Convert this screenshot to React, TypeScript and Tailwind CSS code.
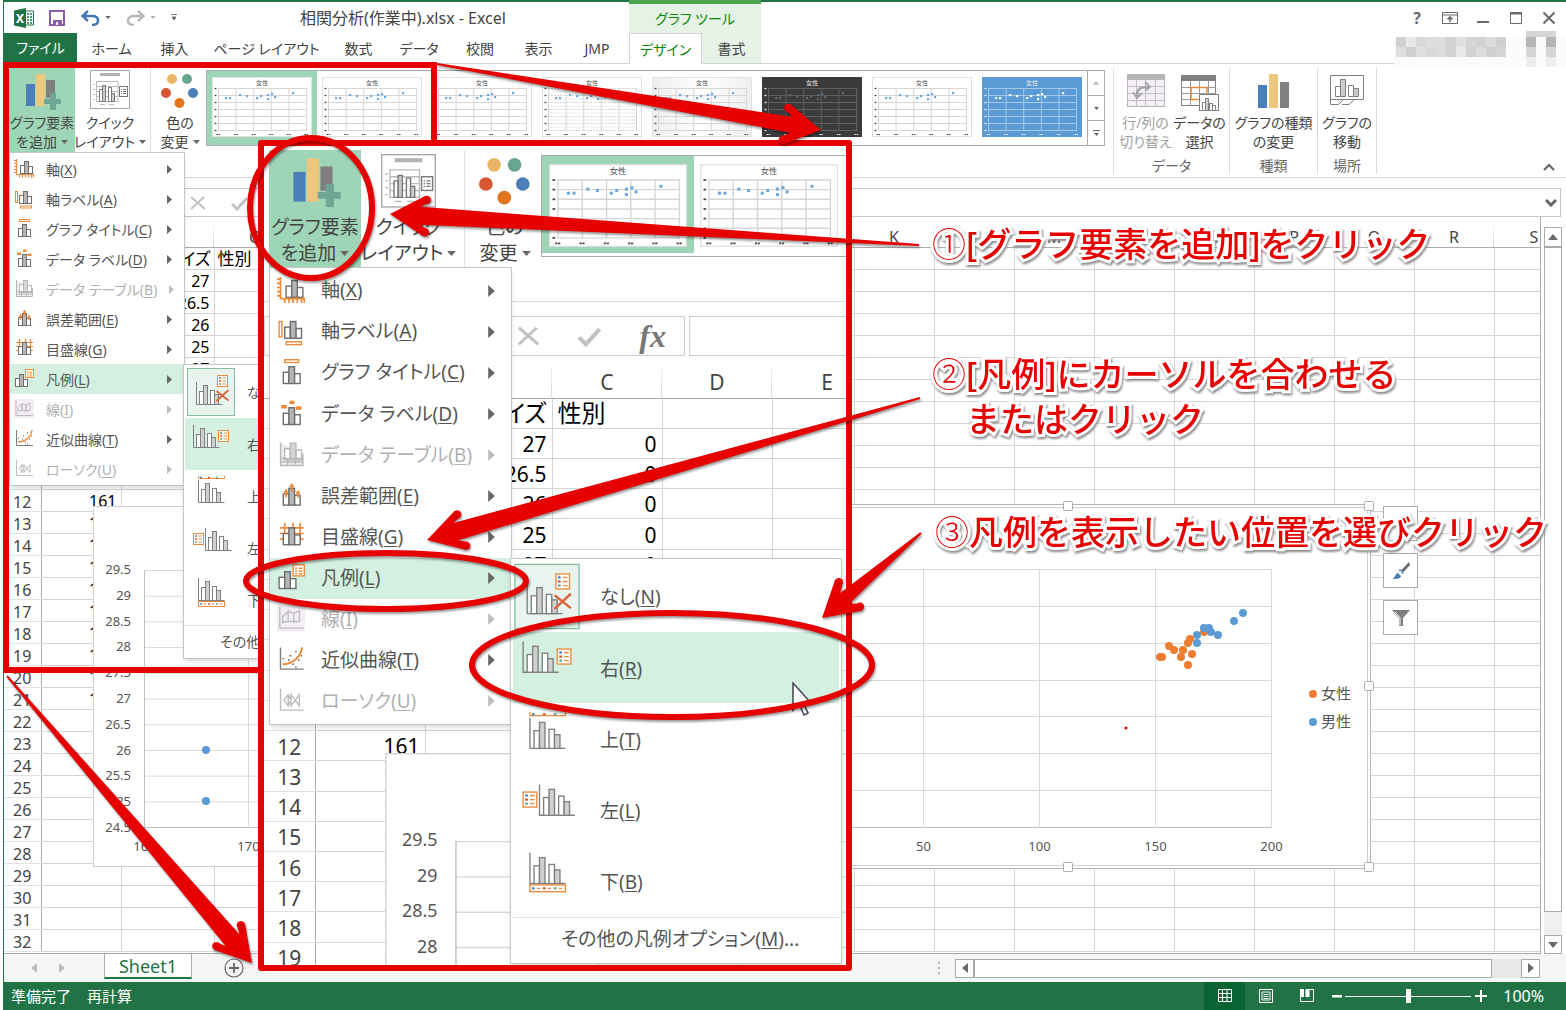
import React from "react";

const GRAY = "#7f7f7f";
const ORANGE = "#ed8b3b";
const RED = "#e60000";

/* ---------- menu icons ---------- */

function Bars({ dx = 0, dy = 0, color = "#6e6e6e", fill = "#b5b5b5" }: { dx?: number; dy?: number; color?: string; fill?: string }) {
  return (
    <g transform={`translate(${dx} ${dy})`} stroke={color} strokeWidth="1">
      <rect x="5.5" y="6.5" width="4" height="8" fill="#fff" />
      <rect x="13.5" y="7.5" width="4" height="7" fill="#fff" />
      <rect x="9.5" y="2.5" width="4" height="12" fill={fill} />
    </g>
  );
}

const menuIcons: Record<string, React.ReactNode> = {
  axis: (
    <>
      <Bars dx={1} />
      <path d="M2.5 0v15.5H20M0 1.5h2M0 4.5h2M0 7.5h2M0 10.5h2M0 13.5h2M5.5 16v2.5M8.5 16v2.5M11.5 16v2.5M14.5 16v2.5M17.5 16v2.5M19.5 16v2.5" stroke={ORANGE} strokeWidth="1.2" fill="none" />
    </>
  ),
  axisLabel: (
    <>
      <Bars />
      <rect x="1.5" y="2.5" width="2" height="11" fill="#fff" stroke={ORANGE} />
      <rect x="6.5" y="17" width="11" height="2" fill="#fff" stroke={ORANGE} />
    </>
  ),
  title: (
    <>
      <Bars dy={3} dx={-1} />
      <rect x="5.5" y="0.5" width="10" height="2" fill="#fff" stroke={ORANGE} />
    </>
  ),
  dataLabel: (
    <>
      <Bars dy={3} dx={-1} />
      <path d="M3 3.500h4V6H3zM9 .5h3.500V3H9zM13.500 4.500h4V7h-4z" fill={ORANGE} />
    </>
  ),
  dataTable: (
    <>
      <path d="M2.500 1v16.500H18.500V9" fill="#efeaf2" stroke="#b8b8b8" />
      <Bars color="#b8b8b8" fill="#d5d5d5" dy={-1} />
      <path d="M2.500 12.500h16M2.500 15h16M7.500 12v5M13 12v5" stroke="#b8b8b8" fill="none" />
    </>
  ),
  error: (
    <>
      <Bars dy={2} dx={-1} />
      <path d="M6.500 5v6M10.500 1v6M15 6v5M5 7h3M9 3h3M13.500 8h3" stroke={ORANGE} strokeWidth="1.300" />
    </>
  ),
  grid: (
    <>
      <path d="M2 3.500h17M2 7.500h17M2 11.500h17M5.500 0v15M11.500 0v4M16.500 0v15" stroke={ORANGE} strokeWidth="1.200" fill="none" />
      <Bars dy={1} dx={-1} />
    </>
  ),
  legend: (
    <>
      <Bars dx={-4} dy={3} />
      <rect x="11.500" y="0.500" width="8" height="8" fill="#fff" stroke={ORANGE} />
      <path d="M13 3h1.500M15.500 3H18M13 5h1.500M15.500 5H18M13 7h1.500M15.500 7H18" stroke={ORANGE} strokeWidth="1" />
    </>
  ),
  line: (
    <>
      <rect width="20" height="19" fill="#f3eef6" />
      <path d="M2 1v15.500h17M4 12.500V8.500l4-4v7zM8 11.500V4.500l4 1.500v6zM12 12V6l4-2v7.500z" stroke="#bdbdbd" fill="none" />
    </>
  ),
  trend: (
    <>
      <path d="M2.500 1v15.500H19" stroke={GRAY} fill="none" />
      <path d="M4 13c7 0 13-5 14-12" stroke={ORANGE} strokeWidth="1.400" fill="none" />
      <path d="M4 9h1M8 10h1M9 7h1M13 4h1M11 13h1M15 10h1M17 7h1M13 15h1" stroke="#555" />
    </>
  ),
  candle: (
    <path d="M2.500 1v15.500H19M8 5.500L5 9.500l3 4 2-4zM8 5.500v8M10 5.500l6 8v-8l-6 8z" stroke="#bdbdbd" fill="none" />
  ),
};

type Item = { icon: string; label: string; key: string; off?: boolean; hot?: boolean };
const items: Item[] = [
  { icon: "axis", label: "軸", key: "X" },
  { icon: "axisLabel", label: "軸ラベル", key: "A" },
  { icon: "title", label: "グラフ タイトル", key: "C" },
  { icon: "dataLabel", label: "データ ラベル", key: "D" },
  { icon: "dataTable", label: "データ テーブル", key: "B", off: true },
  { icon: "error", label: "誤差範囲", key: "E" },
  { icon: "grid", label: "目盛線", key: "G" },
  { icon: "legend", label: "凡例", key: "L", hot: true },
  { icon: "line", label: "線", key: "I", off: true },
  { icon: "trend", label: "近似曲線", key: "T" },
  { icon: "candle", label: "ローソク", key: "U", off: true },
];

function ElementMenu({ big }: { big?: boolean }) {
  return (
    <div
      role="menu"
      className={
        "flex flex-col border border-[#c6c6c6] bg-white shadow-md " +
        (big ? "h-[458px] w-[243px] py-[2px] text-[19px]" : "h-[334px] w-[176px] py-px text-[14px]")
      }
    >
      {items.map((it) => (
        <button
          key={it.key}
          role="menuitem"
          disabled={it.off}
          className={
            "flex min-h-0 flex-1 items-center whitespace-nowrap text-left " +
            (it.hot ? "bg-[#d3f0e0] " : "") +
            (it.off ? "text-[#b1b1b1] " : "text-[#555] ") +
            (big ? "gap-4 pr-4 pl-[7px]" : "gap-3 pr-3 pl-1")
          }
        >
          <svg viewBox="0 0 20 20" className={big ? "h-7 w-7 shrink-0" : "h-5 w-5 shrink-0"}>{menuIcons[it.icon]}</svg>
          <span className="flex-1">
            {it.label}(<u className="underline-offset-2">{it.key}</u>)
          </span>
          <svg viewBox="0 0 5 9" className={big ? "h-3 w-[7px] shrink-0" : "h-[9px] w-[5px] shrink-0"}>
            <path d="M0 0l5 4.500L0 9z" fill={it.off ? "#bdbdbd" : "#666"} />
          </svg>
        </button>
      ))}
    </div>
  );
}

function Glyph({ x, y }: { x: number; y: number }) {
  return (
    <g transform={`translate(${x} ${y})`} stroke="#808080">
      <path d="M.5 0v22.500H26.500" fill="none" />
      <rect x="3.500" y="9.500" width="4" height="13" fill="#fff" />
      <rect x="7.500" y="3.500" width="4" height="19" fill="#d0d0d0" />
      <rect x="14.500" y="8.500" width="4" height="14" fill="#fff" />
      <rect x="18.500" y="12.500" width="4" height="10" fill="#d0d0d0" />
    </g>
  );
}

function LegendBox({ x, y }: { x: number; y: number }) {
  return (
    <g transform={`translate(${x} ${y})`}>
      <rect x=".5" y=".5" width="10" height="11" fill="#fff" stroke={ORANGE} />
      <path d="M2 3h2" stroke="#4a7fb8" strokeWidth="1.600" />
      <path d="M2 6h2" stroke="#d65532" strokeWidth="1.600" />
      <path d="M2 9h2" stroke="#68a490" strokeWidth="1.600" />
      <path d="M5.500 3H9M5.500 6H9M5.500 9H9" stroke={ORANGE} />
    </g>
  );
}

function LegendStrip({ x, y, h }: { x: number; y: number; h: number }) {
  return (
    <g transform={`translate(${x} ${y})`}>
      {h > 4 ? <rect x=".5" y=".5" width="26" height={h - 1} fill="#fff" stroke={ORANGE} /> : <path d="M.5 0v2.500h26V0" fill="none" stroke={ORANGE} />}
      <path d={`M2 ${h / 2}h2`} stroke="#4a7fb8" strokeWidth="1.600" />
      <path d={`M10 ${h / 2}h2`} stroke="#d65532" strokeWidth="1.600" />
      <path d={`M18 ${h / 2}h2`} stroke="#68a490" strokeWidth="1.600" />
      {h > 4 && <path d={`M5.500 ${h / 2}H8M13.500 ${h / 2}H16M21.500 ${h / 2}H24`} stroke={ORANGE} />}
    </g>
  );
}

const legendItems = [
  {
    label: "なし",
    key: "N",
    icon: (
      <>
        <rect x=".5" y="2.500" width="47" height="47" fill="#e9f4ee" stroke="#86bfa0" />
        <Glyph x={9} y={16} />
        <LegendBox x={30} y={9} />
        <path d="M29.500 25l12 9.500M41.500 24l-12 11" stroke="#d9643f" strokeWidth="1.800" />
      </>
    ),
  },
  { label: "右", key: "R", hot: true, icon: (<><Glyph x={6} y={7} /><LegendBox x={31} y={12} /></>) },
  { label: "上", key: "T", icon: (<><LegendStrip x={11} y={6} h={3} /><Glyph x={11} y={10} /></>) },
  { label: "左", key: "L", icon: (<><LegendBox x={6} y={12} /><Glyph x={18} y={7} /></>) },
  { label: "下", key: "B", icon: (<><Glyph x={11} y={5} /><LegendStrip x={11} y={28} h={6} /></>) },
];

function LegendMenu({ big }: { big?: boolean }) {
  return (
    <div
      role="menu"
      className={
        "flex flex-col border border-[#c6c6c6] bg-white text-[#555] shadow-md " +
        (big ? "h-[406px] w-[332px] p-[2px] text-[19px]" : "h-[295px] w-[241px] p-px text-[14px]")
      }
    >
      {legendItems.map((it) => (
        <button
          key={it.key}
          role="menuitem"
          className={
            "flex min-h-0 flex-1 items-center whitespace-nowrap text-left " +
            (it.hot ? "bg-[#d3f0e0] " : "") +
            (big ? "gap-5 pl-px" : "gap-3 pl-[2px]")
          }
        >
          <svg viewBox="0 0 48 52" className={big ? "h-[71px] w-[66px] shrink-0" : "h-[52px] w-12 shrink-0"}>{it.icon}</svg>
          <span className="pt-[2px]">
            {it.label}(<u className="underline-offset-2">{it.key}</u>)
          </span>
        </button>
      ))}
      <button role="menuitem" className={"border-t border-[#e0e0e0] text-left whitespace-nowrap " + (big ? "h-[44px] pl-12" : "h-8 pl-[35px]")}>
        その他の凡例オプション(<u className="underline-offset-2">M</u>)...
      </button>
    </div>
  );
}

/* ---------- ribbon pieces ---------- */

const dots = [[14, 21], [18, 21], [28, 18], [35, 19], [45, 21], [49, 19], [56, 18], [56, 22], [60, 17], [63, 20], [81, 16]];

function Thumb({ look = "plain", className }: { look?: string; className: string }) {
  const bg = look === "dark" ? "#3b3b3b" : look === "blue" ? "#5b9bd5" : "#ffffff";
  const grid = look === "dark" ? "#606060" : look === "blue" ? "#a4c8ea" : "#d6d6d6";
  const dot = look === "dark" ? "#59697a" : look === "blue" ? "#ffffff" : "#6fa9dc";
  const ink = look === "dark" || look === "blue" ? "#eeeeee" : "#4a4a4a";
  return (
    <svg viewBox="0 0 100 60" className={className}>
      <defs>
        <linearGradient id="thumb-fade" x1="0" y1="0" x2="1" y2="0">
          <stop offset="0" stopColor="#eeeeee" />
          <stop offset=".5" stopColor="#ffffff" />
          <stop offset="1" stopColor="#eeeeee" />
        </linearGradient>
      </defs>
      <rect x=".5" y=".5" width="99" height="59" fill={look === "fade" ? "url(#thumb-fade)" : bg} stroke={look === "dark" || look === "blue" ? bg : "#e2e2e2"} />
      {[0, 1, 2, 3, 4, 5, 6].map((i) => (
        <path key={i} d={`M6 ${11.5 + i * 7}H95`} stroke={grid} strokeDasharray={look === "hatch" ? "2 1" : undefined} />
      ))}
      {look === "hatch" && [0, 1, 2, 3, 4, 5].map((i) => <path key={i} d={`M6 ${15 + i * 7}H95`} stroke="#eeeeee" />)}
      {[0, 1, 2, 3, 4, 5].map((i) => (
        <path key={i} d={`M${6.5 + i * 17.6} 11V54`} stroke={grid} />
      ))}
      {[0, 1, 2, 3, 4, 5, 6].map((i) => (
        <path key={i} d={`M2.500 ${11.5 + i * 7}h2`} stroke={ink} strokeWidth="1.300" />
      ))}
      {[0, 1, 2, 3, 4, 5].map((i) => (
        <path key={i} d={`M${4.5 + i * 17.6} 57.500h4`} stroke={ink} strokeWidth="1.200" strokeDasharray="1.600 .5" />
      ))}
      <text x="50" y="7.500" fontSize="6" textAnchor="middle" fill={ink}>女性</text>
      {dots.map(([x, y], i) => (
        <rect key={i} x={x - 1} y={y - 1} width="2.200" height="2.200" fill={dot} />
      ))}
    </svg>
  );
}

function AddIcon({ className }: { className: string }) {
  return (
    <svg viewBox="0 0 40 38" className={className}>
      <path d="M4 10h9v22H4z" fill="#4a7fb8" />
      <path d="M14 0h9v32h-9z" fill="#eec77f" />
      <path d="M24 6h9v18h-9z" fill="#808080" />
      <path d="M28 19h6v6h5v5h-5v6h-6v-6h-6v-5h6z" fill="#6fa594" />
    </svg>
  );
}

function QuickIcon({ className }: { className: string }) {
  return (
    <svg viewBox="0 0 40 40" className={className}>
      <rect x=".5" y=".5" width="39" height="38" fill="#fff" stroke="#a8a8a8" />
      <rect x="10" y="3" width="20" height="3" fill="#b3b3b3" />
      <path d="M6.500 11.500H28v20H6.500zM6.500 16.500H28M6.500 21.500H28M6.500 26.500H28M3 14.500h2M3 19.500h2M3 24.500h2M3 29.500h2M10 34.500h5M19 34.500h5" stroke="#bbb" fill="none" />
      <g stroke="#777" fill="#fff">
        <path d="M9.500 19.500h3v12h-3zM18.500 17.500h3v14h-3z" />
        <path d="M12.500 15.500h3v16h-3zM21.500 23.500h3v8h-3z" fill="#ccc" />
        <rect x="29.500" y="16.500" width="8" height="10" />
        <path d="M31 19.500h1M33 19.500h3M31 21.500h1M33 21.500h3M31 23.500h1M33 23.500h3" />
      </g>
    </svg>
  );
}

function ColorIcon({ className }: { className: string }) {
  return (
    <svg viewBox="0 0 38 38" className={className}>
      <circle cx="11" cy="5" r="5" fill="#eab665" />
      <circle cx="26" cy="5" r="5" fill="#66a690" />
      <circle cx="5" cy="19" r="5" fill="#d65532" />
      <circle cx="32" cy="19" r="5" fill="#4a7fb8" />
      <circle cx="18.500" cy="29" r="5" fill="#e3761c" />
    </svg>
  );
}

function Caret({ className = "inline-block h-[4px] w-[7px]" }: { className?: string }) {
  return (
    <svg viewBox="0 0 7 4" className={className}>
      <path d="M0 0h7L3.500 4z" fill="#666" />
    </svg>
  );
}

function RibbonButton({ icon, lines, caret, big, className, off }: { icon: React.ReactNode; lines: [string, string]; caret?: boolean; big?: boolean; className: string; off?: boolean }) {
  return (
    <button
      disabled={off}
      className={
        "flex shrink-0 flex-col items-center whitespace-nowrap " +
        (off ? "text-[#a0a0a0] " : "text-[#444] ") +
        (big ? "h-[117px] pt-2 text-[19px] leading-[26px] " : "h-[84px] pt-[6px] text-[14px] leading-[19px] ") +
        className
      }
    >
      <span className={"flex items-start justify-center " + (big ? "h-[56px]" : "h-[39px]")}>{icon}</span>
      <span>{lines[0]}</span>
      <span className="flex items-center gap-1">
        {lines[1]}
        {caret && <Caret className={big ? "h-[5px] w-[9px]" : "h-1 w-[7px]"} />}
      </span>
    </button>
  );
}

function ChartTools({ big }: { big?: boolean }) {
  const size = big ? "h-[52px] w-[54px]" : "h-[38px] w-10";
  return (
    <div className={"flex shrink-0 " + (big ? "w-[277px]" : "w-[202px]")}>
      <RibbonButton big={big} caret icon={<AddIcon className={size} />} lines={["グラフ要素", "を追加"]} className={"bg-[#9fd5b7] " + (big ? "w-[92px]" : "w-[66px]")} />
      <RibbonButton big={big} caret icon={<QuickIcon className={"-mt-1 " + (big ? "h-[55px] w-[55px]" : "h-10 w-10")} />} lines={["クイック", "レイアウト"]} className={"border-r border-[#e1e1e1] " + (big ? "w-[104px] pr-2" : "w-[76px] pr-[5px]")} />
      <RibbonButton big={big} caret icon={<ColorIcon className={size} />} lines={["色の", "変更"]} className={big ? "w-[80px]" : "w-[58px]"} />
    </div>
  );
}

/* ---------- worksheet ---------- */

const letters = "ABCDEFGHIJKLMNOPQRSTUVWXYZ".split("");
const cells: Record<string, string> = {
  B1: "サイズ", C1: "性別", B2: "27", C2: "0", B3: "26.5", C3: "0", B4: "26", C4: "0", B5: "25", C5: "0", B6: "27", C6: "0", A12: "161",
  A13: "165", A14: "158", A15: "163", A16: "160", A17: "168", A18: "162", A19: "166", A20: "170", A21: "164",
};

function Sheet({ cols, rows, big }: { cols: number; rows: number; big?: boolean }) {
  return (
    <table className={"table-fixed border-collapse text-black " + (big ? "h-[617px] w-[728px] text-[21px] leading-none" : "w-[1570px] text-base leading-none")}>
      <colgroup>
        <col className={big ? "w-[51px]" : "w-[37px]"} />
        {letters.slice(0, cols).map((l) => (
          <col key={l} className={l === "B" ? (big ? "w-[127px]" : "w-[93px]") : big ? "w-[110px]" : "w-[80px]"} />
        ))}
      </colgroup>
      <thead>
        <tr className={big ? "h-[42px]" : "h-[30px]"}>
          <th className="border-r border-b border-[#ababab]" />
          {letters.slice(0, cols).map((l) => (
            <th key={l} scope="col" className={"border-b border-b-[#ababab] bg-[linear-gradient(to_top,#d4d4d4,#f4f4f4)] bg-[length:1px_70%] bg-[position:right_bottom] bg-no-repeat p-0 font-normal text-[#444] " + (big ? "pt-3" : "pt-[10px]")}>
              {l}
            </th>
          ))}
        </tr>
      </thead>
      <tbody>
        {Array.from({ length: rows }, (_, r) => (
          <tr key={r} className={big ? "" : "h-[22px]"}>
            <th scope="row" className="border-r border-b border-r-[#ababab] border-b-[#e1e1e1] p-0 pt-[3px] font-normal text-[#444]">{r + 1}</th>
            {letters.slice(0, cols).map((l) => {
              const v = cells[l + (r + 1)] ?? "";
              const head = (big ? "text-[24px] px-[5px] " : "text-[17px] px-[3px] ") + (l === "B" ? "text-right" : "text-left");
              return (
                <td key={l} className={"overflow-hidden border-r border-b border-[#d4d4d4] py-0 whitespace-nowrap " + (r === 0 ? head : "pt-[2px] text-right " + (big ? "px-[5px]" : "px-1"))}>
                  {v}
                </td>
              );
            })}
          </tr>
        ))}
      </tbody>
    </table>
  );
}

function SizeChart({ className }: { className: string }) {
  const labels = ["29.5", "29", "28.5", "28", "27.5", "27", "26.5", "26", "25.5", "25", "24.5"];
  return (
    <svg viewBox="0 0 400 361" className={className}>
      <rect x=".5" y=".5" width="399" height="360" fill="#fff" stroke="#d0d0d0" />
      {labels.map((l, i) => (
        <g key={l}>
          <path d={`M51 ${64.5 + i * 25.7}H380`} stroke={i === 10 ? "#bfbfbf" : "#d9d9d9"} />
          <text x="38" y={68 + i * 25.8} textAnchor="end" fontSize="13" fill="#555">{l}</text>
        </g>
      ))}
      {[51.5, 155.5, 259.5, 363.5].map((x, i) => (
        <g key={x}>
          <path d={`M${x} 64V321`} stroke={i === 0 ? "#bfbfbf" : "#d9d9d9"} />
          <text x={x} y="345" textAnchor="middle" fontSize="13" fill="#555">{160 + i * 10}</text>
        </g>
      ))}
      <circle cx="113" cy="244" r="4" fill="#5b9bd5" />
      <circle cx="113" cy="295" r="4" fill="#5b9bd5" />
    </svg>
  );
}

const women = [[1160, 657], [1162, 657], [1169, 646], [1174, 650], [1183, 650], [1190, 639], [1188, 643], [1181, 657], [1192, 654], [1188, 665], [1204, 632]];
const men = [[1243, 613], [1234, 621], [1204, 628], [1209, 628], [1211, 632], [1218, 635], [1197, 635], [1197, 643]];

function GroupChart() {
  return (
    <svg viewBox="760 500 616 374" className="h-[374px] w-[616px]">
      <rect x="766.500" y="504.500" width="604" height="364" fill="#fff" stroke="#b5b5b5" />
      <rect x="769.500" y="507.500" width="598" height="358" fill="#fff" stroke="#d0d0d0" />
      {[569.5, 606.5, 643.5, 680.5, 716.5, 753.5, 790.5, 827.5].map((y, i) => (
        <path key={y} d={`M808 ${y}H1271`} stroke={i === 7 ? "#bfbfbf" : "#d9d9d9"} />
      ))}
      {[50, 100, 150, 200].map((v, i) => (
        <g key={v}>
          <path d={`M${923.5 + i * 116} 569V828`} stroke="#d9d9d9" />
          <text x={923.5 + i * 116} y="851" textAnchor="middle" fontSize="13" fill="#555">{v}</text>
        </g>
      ))}
      {women.map(([x, y], i) => <circle key={i} cx={x} cy={y} r="4" fill="#ed7d31" />)}
      {men.map(([x, y], i) => <circle key={i} cx={x} cy={y} r="4" fill="#5b9bd5" />)}
      <circle cx="1313" cy="694" r="4" fill="#ed7d31" />
      <circle cx="1313" cy="722" r="4" fill="#5b9bd5" />
      <text x="1321" y="699" fontSize="15" fill="#555">女性</text>
      <text x="1321" y="727" fontSize="15" fill="#555">男性</text>
      <circle cx="1126" cy="728" r="1.500" fill={RED} />
      {[[1068, 506], [1369, 506], [1369, 686], [1068, 867], [1369, 867]].map(([x, y]) => (
        <rect key={`${x}-${y}`} x={x - 4.5} y={y - 4.5} width="9" height="9" rx="1" fill="#fff" stroke="#ababab" />
      ))}
    </svg>
  );
}

/* ---------- call-out drawing ---------- */

function Arrow({ from, to, neck = 8 }: { from: [number, number]; to: [number, number]; neck?: number }) {
  const len = Math.hypot(to[0] - from[0], to[1] - from[1]);
  const u = [(to[0] - from[0]) / len, (to[1] - from[1]) / len];
  const p = (back: number, side: number) => {
    const x = to[0] - u[0] * back - u[1] * side;
    const y = to[1] - u[1] * back + u[0] * side;
    return `${x.toFixed(1)} ${y.toFixed(1)}`;
  };
  const c = (back: number, side: number) => {
    const [x, y] = p(back, side).split(" ");
    return <circle cx={x} cy={y} r="4.200" fill="url(#arrow-red)" />;
  };
  return (
    <g>
      <path d={`M${p(len, -1)}L${p(30, -neck)}L${p(37, -12.5)}L${p(34, -20)}L${p(0, 0)}L${p(34, 20)}L${p(37, 12.5)}L${p(30, neck)}L${p(len, 1)}z`} fill={RED} />
      {c(36, -16.2)}
      {c(36, 16.2)}
    </g>
  );
}

function Note({ children, className }: { children: React.ReactNode; className: string }) {
  return (
    <p className={"absolute text-[34px] leading-[45px] font-medium whitespace-nowrap text-[#e60000] [font-feature-settings:normal] [-webkit-text-stroke:6px_white] [paint-order:stroke_fill] drop-shadow-[1px_2px_1px_#888] " + className}>
      {children}
    </p>
  );
}

/* ---------- title bar ---------- */

const tabs: [string, string][] = [
  ["ホーム", "w-[69px]"], ["挿入", "w-[57px]"], ["ページ レイアウト", "w-[127px]"], ["数式", "w-[57px]"],
  ["データ", "w-[64px]"], ["校閲", "w-[58px]"], ["表示", "w-[59px]"], ["JMP", "w-[58px]"],
];

const shades = ["#d0d0d0", "#e8e8e8", "#d8d8d8", "#dedede", "#dcdcdc", "#d2d2d2", "#e0e0e0", "#d6d6d6", "#d2d2d2", "#dcdcdc", "#d0d0d0"];

function TitleIcons() {
  return (
    <div className="flex items-center pl-[10px]">
      <svg viewBox="0 0 20 20" className="h-5 w-5">
        <path d="M11 3h8.500v14H11" fill="#fff" stroke="#217346" />
        <path d="M13 6h2M16 6h2M13 9h2M16 9h2M13 12h2M16 12h2M13 15h2M16 15h2" stroke="#217346" strokeWidth="1.400" />
        <path d="M0 2.500L12 0v20L0 17.500z" fill="#217346" />
        <text x="6" y="14.500" textAnchor="middle" fontSize="12" fontWeight="bold" fill="#fff">X</text>
      </svg>
      <svg viewBox="0 0 16 16" className="ml-[15px] h-4 w-4">
        <path d="M1 1h14v14H1z" fill="#fff" stroke="#8c5bab" strokeWidth="2" />
        <path d="M4 10h9v5H4z" fill="#8c5bab" />
        <path d="M7 12h2v3H7z" fill="#fff" />
      </svg>
      <svg viewBox="0 0 19 16" className="ml-4 h-4 w-[19px]">
        <path d="M2 6h9c4 0 6 2 6 4.500S15 15 11 15" fill="none" stroke="#3f78b5" strokeWidth="2.400" />
        <path d="M7 1L1.500 6 7 11" fill="none" stroke="#3f78b5" strokeWidth="2.400" />
      </svg>
      <Caret className="ml-[5px] h-[3px] w-[6px]" />
      <svg viewBox="0 0 19 16" className="ml-[15px] h-4 w-[19px]">
        <path d="M17 6H8c-4 0-6 2-6 4.500S4 15 8 15" fill="none" stroke="#b9b9b9" strokeWidth="2.400" />
        <path d="M12 1l5.500 5L12 11" fill="none" stroke="#b9b9b9" strokeWidth="2.400" />
      </svg>
      <Caret className="ml-[5px] h-[3px] w-[6px] opacity-50" />
      <svg viewBox="0 0 6 7" className="ml-[15px] h-[7px] w-[6px]">
        <path d="M0 .5h6M1 3h4L3 6z" stroke="#666" fill="#666" strokeWidth=".8" />
      </svg>
    </div>
  );
}

function WindowButtons() {
  const cls = "h-4 w-4";
  return (
    <div className="ml-auto flex items-center gap-[17px] pr-[9px] text-[#6a6a6a]">
      <button aria-label="ヘルプ" className="w-4 text-base leading-none font-bold">?</button>
      <button aria-label="リボンの表示オプション">
        <svg viewBox="0 0 16 16" className={cls} fill="none" stroke="currentColor"><path d="M.5 2.500h15v11H.5zM.5 5h15" /><path d="M8 12V7M5.500 9.500L8 7l2.500 2.500" strokeWidth="1.600" /></svg>
      </button>
      <button aria-label="最小化">
        <svg viewBox="0 0 16 16" className={cls}><path d="M2 11h12v2H2z" fill="currentColor" /></svg>
      </button>
      <button aria-label="最大化">
        <svg viewBox="0 0 16 16" className={cls} fill="none" stroke="currentColor"><path d="M2.500 2.500h11v11h-11z" /><path d="M2 3.500h12" strokeWidth="2" /></svg>
      </button>
      <button aria-label="閉じる">
        <svg viewBox="0 0 16 16" className={cls} stroke="currentColor" strokeWidth="2"><path d="M2.500 2.500l11 11M13.500 2.500l-11 11" /></svg>
      </button>
    </div>
  );
}

const ArrowHead = ({ d, light }: { d: string; light?: boolean }) => (
  <svg viewBox="0 0 10 10" className="h-[10px] w-[10px]"><path d={d} fill={light ? "#bdbdbd" : "#6a6a6a"} /></svg>
);
const UP = "M0 8L5 2l5 6z";
const DOWN = "M0 2h10L5 8z";
const LEFT = "M8 0v10L2 5z";
const RIGHT = "M2 0v10l6-5z";

function Group({ title, children, className }: { title: string; children: React.ReactNode; className: string }) {
  return (
    <section className={"flex h-[106px] shrink-0 flex-col items-center justify-between border-r border-[#dcdcdc] text-[14px] " + className}>
      <div className="flex">{children}</div>
      <h2 className="leading-[16px] text-[#666]">{title}</h2>
    </section>
  );
}

export default function App() {
  return (
    <div className="relative flex h-screen flex-col overflow-hidden bg-white pl-[3px] font-['Noto_Sans','Noto_Sans_CJK_JP',sans-serif] [font-feature-settings:'palt'] text-[#444]">
      <div className="flex min-h-0 flex-1 flex-col border-t-2 border-l border-[#217346]">
        {/* title bar */}
        <header className="relative flex h-[31px] shrink-0 items-center">
          <TitleIcons />
          <h1 className="absolute left-[296px] text-base leading-none">相関分析(作業中).xlsx - Excel</h1>
          <div className="absolute top-[-2px] left-[625px] flex h-[33px] w-[132px] items-center justify-center border-t-4 border-[#4ca64c] bg-[#e6f2e6] text-[14px] text-[#0c860c]">
            グラフ ツール
          </div>
          <WindowButtons />
        </header>

        {/* tabs */}
        <nav className="relative flex h-[31px] shrink-0 items-stretch border-b border-[#d4d4d4] text-[14px]">
          <button className="mb-px w-[73px] bg-[#217346] text-white">ファイル</button>
          {tabs.map(([t, w]) => (
            <button key={t} className={"whitespace-nowrap " + w}>{t}</button>
          ))}
          <button className="-mb-px ml-[3px] w-[73px] border border-b-0 border-[#d4d4d4] bg-white text-[#0c860c]">デザイン</button>
          <button className="w-[59px] bg-[#e6f2e6]">書式</button>
          <svg viewBox="0 0 172 38" className="absolute top-[-2px] right-0 h-[38px] w-[172px]">
            <rect y="6" width="172" height="30" fill="#fbfbfb" />
            {shades.map((s, i) => (
              <g key={i}>
                <rect x={2 + i * 10} y="6" width="10" height="10" fill={s} />
                <rect x={2 + i * 10} y="16" width="10" height="10" fill={shades[(i * 7 + 3) % 11]} />
              </g>
            ))}
            <path d="M132 0h30v6h-30zM132 16h10v10h-10zM152 16h10v10h-10z" fill="#d6d6d6" />
            <path d="M132 6h10v10h-10zM152 6h10v10h-10z" fill="#b5b5b5" />
            <path d="M132 26h10v10h-10zM152 26h10v10h-10z" fill="#ededed" />
          </svg>
        </nav>

        {/* ribbon */}
        <section className="flex h-[114px] shrink-0 items-start border-b border-[#d4d4d4] pt-1 pl-[5px]">
          <ChartTools />
          <div className="mt-[2px] ml-[-5px] flex h-[76px] shrink-0 border border-[#ababab]">
            <div className="bg-[#9fd5b7] px-[5px] pt-[6px]">
              <Thumb className="h-[60px] w-[100px]" />
            </div>
            <div className="flex gap-[10px] pt-[6px] pr-[5px] pl-[5px]">
              {["plain", "plain", "hatch", "fade", "dark", "plain", "blue"].map((k, i) => (
                <Thumb key={i} look={k} className="h-[60px] w-[100px]" />
              ))}
            </div>
            <div className="flex w-[17px] flex-col divide-y divide-[#ababab] border-l border-[#ababab]">
              <button aria-label="上へ" className="flex flex-1 items-center justify-center"><svg viewBox="0 0 6 4" className="h-1 w-[6px]"><path d="M0 4h6L3 0z" fill="#bdbdbd" /></svg></button>
              <button aria-label="下へ" className="flex flex-1 items-center justify-center"><Caret className="h-[3px] w-[5px]" /></button>
              <button aria-label="その他" className="flex flex-1 items-center justify-center"><svg viewBox="0 0 7 7" className="h-[7px] w-[7px]"><path d="M0 .5h7" stroke="#666" /><path d="M1 3h5L3.500 6z" fill="#666" /></svg></button>
            </div>
          </div>
          <div className="ml-2 flex border-l border-[#dcdcdc]">
            <Group title="データ" className="w-[116px]">
              <RibbonButton
                off
                lines={["行/列の", "切り替え"]}
                className="w-[56px]"
                icon={
                  <svg viewBox="0 0 38 34" className="h-[34px] w-[38px]">
                    <rect x=".5" y=".5" width="37" height="32" fill="#f5f0f8" stroke="#b5b5b5" />
                    <rect width="38" height="6" fill="#b5b5b5" />
                    <path d="M0 12.500h38M0 19.500h38M0 26.500h38M9.500 6v27M18.500 6v27M28.500 6v27" stroke="#c2c2c2" />
                    <path d="M10 22c0-8 4-9 12-9" fill="none" stroke="#a5a5a5" strokeWidth="2.500" />
                    <path d="M6 18l4 6 5-5M18 8l5 5-5 4" fill="none" stroke="#a5a5a5" strokeWidth="2" />
                  </svg>
                }
              />
              <RibbonButton
                lines={["データの", "選択"]}
                className="w-[52px]"
                icon={
                  <svg viewBox="0 0 38 38" className="h-[38px] w-[38px]">
                    <rect x=".5" y="1.500" width="34" height="30" fill="#fff" stroke="#808080" />
                    <rect y="1" width="35" height="6" fill="#808080" />
                    <path d="M0 13.500h35M0 19.500h35M0 25.500h35M9.500 7v25M18.500 7v25M27.500 7v25" stroke="#9a9a9a" />
                    <rect x="10" y="13.500" width="16" height="12" fill="none" stroke={ORANGE} strokeWidth="1.500" />
                    <rect x="18.500" y="20.500" width="19" height="16" fill="#fff" stroke="#808080" />
                    <path d="M21.500 28.500h3v8h-3zM28.500 29.500h3v7h-3zM31.500 31.500h3v5h-3z" fill="#fff" stroke="#808080" />
                    <path d="M24.500 24.500h3v12h-3z" fill="#ccc" stroke="#808080" />
                  </svg>
                }
              />
            </Group>
            <Group title="種類" className="w-[88px]">
              <RibbonButton lines={["グラフの種類", "の変更"]} className="w-[84px]" icon={<svg viewBox="0 0 34 34" className="h-[34px] w-[34px]"><path d="M1 11h9v23H1z" fill="#4a7fb8" /><path d="M12 0h9v34h-9z" fill="#eec77f" /><path d="M23 8h9v26h-9z" fill="#808080" /></svg>} />
            </Group>
            <Group title="場所" className="w-[59px]">
              <RibbonButton
                lines={["グラフの", "移動"]}
                className="w-[56px]"
                icon={
                  <svg viewBox="0 0 34 32" className="h-8 w-[34px]">
                    <path d="M.5 1.500h33v24H.5zM.5 25v5.500h8L13 26M12 30.500h7L24 26" fill="#fff" stroke="#808080" />
                    <path d="M5.500 12.500h5v10h-5zM18.500 11.500h5v11h-5z" fill="#fff" stroke="#808080" />
                    <path d="M10.500 5.500h5v17h-5zM23.500 14.500h5v8h-5z" fill="#ccc" stroke="#808080" />
                  </svg>
                }
              />
            </Group>
          </div>
          <button aria-label="リボンを折りたたむ" className="mt-auto mr-[11px] mb-[6px] ml-auto">
            <svg viewBox="0 0 12 8" className="h-2 w-3"><path d="M1 7l5-5 5 5" fill="none" stroke="#666" strokeWidth="2.200" /></svg>
          </button>
        </section>

        {/* formula bar */}
        <div className="flex h-[39px] shrink-0 items-stretch gap-1 pt-[10px] pr-[5px] text-[#c2c2c2]">
          <input aria-label="名前ボックス" className="w-[150px] border border-[#c6c6c6]" />
          <div className="flex w-[160px] items-center border border-[#c6c6c6] pl-[30px]">
            <svg viewBox="0 0 18 16" className="h-4 w-[18px]"><path d="M2 2l14 12M15 2L2 14" stroke="currentColor" strokeWidth="2.200" /></svg>
            <svg viewBox="0 0 18 16" className="ml-6 h-4 w-[18px]"><path d="M1 9l5 5L16 3" fill="none" stroke="currentColor" strokeWidth="3" /></svg>
          </div>
          <div className="flex flex-1 items-center border border-[#c6c6c6] pr-[3px]">
            <input aria-label="数式バー" className="min-w-0 flex-1 outline-none" />
            <svg viewBox="0 0 12 8" className="h-2 w-3"><path d="M1 1l5 5 5-5" fill="none" stroke="#666" strokeWidth="3" /></svg>
          </div>
        </div>

        {/* worksheet */}
        <main className="flex min-h-0 flex-1">
          <div className="relative min-w-0 flex-1 overflow-hidden border-r border-b border-[#ababab]">
            <Sheet cols={19} rows={32} />
            <div className="absolute top-[289px] left-[89px]"><SizeChart className="h-[361px] w-[400px]" /></div>
            <div className="absolute top-[283px] left-[756px]"><GroupChart /></div>
            <div className="absolute top-[289px] left-[1379px] flex flex-col gap-3">
              <button aria-label="グラフ要素" className="h-[35px] w-[35px] border border-[#ababab] bg-white" />
              <button aria-label="グラフ スタイル" className="flex h-[35px] w-[35px] items-center justify-center border border-[#ababab] bg-white">
                <svg viewBox="0 0 20 20" className="h-5 w-5">
                  <path d="M18 1L10.500 9l2 2L19 4z" fill="#6a6a6a" />
                  <path d="M8 9.500c2-1 4 1 3.500 3.500" fill="none" stroke="#4a7fb8" strokeWidth="1.500" />
                  <path d="M1 18c3 0 3-6 6-6l3 3c0 3-6 3-9 3z" fill="#4a7fb8" />
                </svg>
              </button>
              <button aria-label="グラフ フィルター" className="flex h-[35px] w-[35px] items-center justify-center border border-[#ababab] bg-white">
                <svg viewBox="0 0 20 20" className="h-5 w-5">
                  <path d="M1 2h18l-7 8v8H8v-8z" fill="#7f7f7f" />
                  <path d="M4 4l5 5.500V17" fill="none" stroke="#fff" />
                </svg>
              </button>
            </div>
          </div>
          <div className="flex w-[25px] shrink-0 flex-col bg-white pt-[10px] pr-[4px] pl-[3px]">
            <button aria-label="上へスクロール" className="flex h-5 items-center justify-center border border-[#ababab]"><ArrowHead d={UP} /></button>
            <div className="flex min-h-0 flex-1 flex-col bg-[#f0f0f0]"><div className="mb-[23px] flex-1 border border-[#ababab] bg-white" /></div>
            <button aria-label="下へスクロール" className="flex h-[19px] items-center justify-center border border-[#ababab]"><ArrowHead d={DOWN} /></button>
          </div>
        </main>

        {/* sheet tabs */}
        <div className="flex h-7 shrink-0 items-center bg-[#f5f5f5] pr-[26px]">
          <div className="flex w-[100px] items-center gap-[18px] pl-[25px]">
            <button aria-label="前のシート"><ArrowHead light d={LEFT} /></button>
            <button aria-label="次のシート"><ArrowHead light d={RIGHT} /></button>
          </div>
          <button className="mb-[3px] h-[25px] w-[88px] border-x border-b-2 border-x-[#ababab] border-b-[#217346] bg-white text-[18px] leading-[22px] text-[#217346]">Sheet1</button>
          <button aria-label="新しいシート" className="ml-8">
            <svg viewBox="0 0 20 20" className="h-5 w-5" fill="none" stroke="#666"><circle cx="10" cy="10" r="9" strokeWidth="1.200" /><path d="M10 5v10M5 10h10" strokeWidth="1.800" /></svg>
          </button>
          <svg viewBox="0 0 2 12" className="ml-auto h-3 w-[2px]"><path d="M0 0h2v2H0zM0 5h2v2H0zM0 10h2v2H0z" fill="#b5b5b5" /></svg>
          <div className="ml-[15px] flex h-[19px] w-[585px] bg-[#e8e8e8]">
            <button aria-label="左へスクロール" className="flex w-[19px] items-center justify-center border border-[#ababab] bg-white"><ArrowHead d={LEFT} /></button>
            <div className="mr-[29px] flex-1 border border-[#ababab] bg-white" />
            <button aria-label="右へスクロール" className="flex w-[19px] items-center justify-center border border-[#ababab] bg-white"><ArrowHead d={RIGHT} /></button>
          </div>
        </div>

        {/* status bar */}
        <footer className="flex h-7 shrink-0 items-center bg-[#217346] pl-[7px] text-[15px] text-white">
          <span>準備完了</span>
          <span className="ml-4">再計算</span>
          <div className="ml-auto flex h-full items-center pr-[22px]">
            <button aria-label="標準" className="flex h-full w-[41px] items-center justify-center bg-[#0a6332]">
              <svg viewBox="0 0 14 14" className="h-[14px] w-[14px]" stroke="#fff" fill="none"><path d="M.5.5h13v12H.5zM.5 4.500h13M.5 8.500h13M4.500.5v12M9 .5v12" /></svg>
            </button>
            <button aria-label="ページ レイアウト" className="flex h-full w-[41px] items-center justify-center">
              <svg viewBox="0 0 14 14" className="h-[14px] w-[14px]" stroke="#fff" fill="none"><path d="M.5.5h13v13H.5zM3 3h8v8H3zM4.500 5.500h5M4.500 7.500h5M4.500 9.500h5" /></svg>
            </button>
            <button aria-label="改ページ プレビュー" className="flex h-full w-[41px] items-center justify-center">
              <svg viewBox="0 0 14 14" className="h-[14px] w-[14px]"><path d="M0 0h4v8H0zM5.500 0h4v8h-4z" fill="#fff" /><path d="M.5 0v12.500h13V.5H9" stroke="#fff" fill="none" /></svg>
            </button>
            <button aria-label="縮小" className="ml-1"><svg viewBox="0 0 12 12" className="h-3 w-3"><path d="M1 5h10v2.500H1z" fill="#fff" /></svg></button>
            <input
              type="range"
              aria-label="ズーム"
              defaultValue={50}
              className="mx-[2px] h-4 w-[126px] appearance-none bg-[linear-gradient(#fff,#fff)] bg-[length:100%_1px] bg-center bg-no-repeat [&::-webkit-slider-thumb]:h-[14px] [&::-webkit-slider-thumb]:w-[5px] [&::-webkit-slider-thumb]:appearance-none [&::-webkit-slider-thumb]:bg-white"
            />
            <button aria-label="拡大" className="ml-[2px]"><svg viewBox="0 0 12 12" className="h-3 w-3"><path d="M0 5h12v2H0zM5 0h2v12H5z" fill="#fff" /></svg></button>
            <span className="ml-4 text-base">100%</span>
          </div>
        </footer>
      </div>

      {/* open menus */}
      <div className="absolute top-[152px] left-[9px]"><ElementMenu /></div>
      <div className="absolute top-[364px] left-[183px]"><LegendMenu /></div>

      {/* framed area and its enlargement */}
      <div className="absolute top-[62px] left-[3px] h-[611px] w-[434px] border-[6px] border-[#e60000]" />
      <div className="absolute top-[140px] left-[258px] h-[831px] w-[594px] overflow-hidden rounded-[3px] border-[6px] border-[#e60000] bg-white">
        <div className="flex h-[156px] items-start border-b border-[#dcdcdc] pt-1 pl-[5px]">
          <ChartTools big />
          <div className="mt-[5px] ml-[-5px] flex h-[102px] shrink-0 border border-r-0 border-[#ababab]">
            <div className="mb-[3px] bg-[#9fd5b7] px-[7px] pt-[8px]"><Thumb className="h-[83px] w-[138px]" /></div>
            <div className="pt-2 pr-2 pl-[6px]"><Thumb className="h-[83px] w-[138px]" /></div>
          </div>
        </div>
        <div className="flex h-[54px] items-stretch gap-1 pt-[14px] text-[#c2c2c2]">
          <div className="flex w-[421px] shrink-0 items-center justify-end gap-[36px] border border-[#d0d0d0] pr-[18px]">
            <svg viewBox="0 0 18 16" className="h-[22px] w-[25px]"><path d="M2 2l14 12M15 2L2 14" stroke="currentColor" strokeWidth="2.200" /></svg>
            <svg viewBox="0 0 18 16" className="h-[22px] w-[26px]"><path d="M1 9l5 5L16 3" fill="none" stroke="currentColor" strokeWidth="3" /></svg>
            <span className="font-['Liberation_Serif',serif] text-[32px] leading-none font-bold text-[#777] italic">fx</span>
          </div>
          <div className="flex-1 border border-r-0 border-[#d0d0d0]" />
        </div>
        <div className="relative">
          <Sheet big cols={6} rows={19} />
          <div className="absolute top-[397px] left-[121px]"><SizeChart className="h-[496px] w-[550px]" /></div>
        </div>
        <div className="absolute top-[121px] left-[5px]"><ElementMenu big /></div>
        <div className="absolute top-[412px] left-[246px]"><LegendMenu big /></div>
        <svg viewBox="0 0 20 36" className="absolute top-[536px] left-[528px] h-9 w-5">
          <path d="M1 1v27l6-6 5 11 4-2-5-10h8z" fill="#fff" stroke="#4a4a5a" strokeWidth="1.600" />
        </svg>
      </div>

      <svg viewBox="0 0 1566 1010" className="pointer-events-none absolute top-0 left-0 h-[1010px] w-[1566px] drop-shadow-[1px_2px_1px_#0006]">
        <defs>
          <linearGradient id="arrow-red" x1="0" y1="0" x2="0" y2="1">
            <stop offset="0" stopColor="#f20505" />
            <stop offset="1" stopColor="#d40000" />
          </linearGradient>
        </defs>
        <g fill="none" stroke={RED} strokeWidth="6">
          <ellipse cx="311" cy="208" rx="61" ry="70" />
          <ellipse cx="386" cy="581" rx="140" ry="28" />
          <ellipse cx="672" cy="665" rx="200" ry="52" />
        </g>
        <Arrow from={[437, 64]} to={[821, 130]} />
        <Arrow from={[7, 676]} to={[252, 963]} neck={9} />
        <Arrow from={[919, 245]} to={[390, 214]} neck={9} />
        <Arrow from={[920, 398]} to={[427, 540]} neck={9} />
        <Arrow from={[921, 533]} to={[822, 618]} neck={7} />
      </svg>

      <Note className="top-[222px] left-[932px]"><span className="font-light">①</span>[グラフ要素を追加]をクリック</Note>
      <Note className="top-[352px] left-[932px]"><span className="font-light">②</span>[凡例]にカーソルを合わせる<br /><span className="pl-[34px]">またはクリック</span></Note>
      <Note className="top-[510px] left-[935px]"><span className="font-light">③</span>凡例を表示したい位置を選びクリック</Note>
    </div>
  );
}
